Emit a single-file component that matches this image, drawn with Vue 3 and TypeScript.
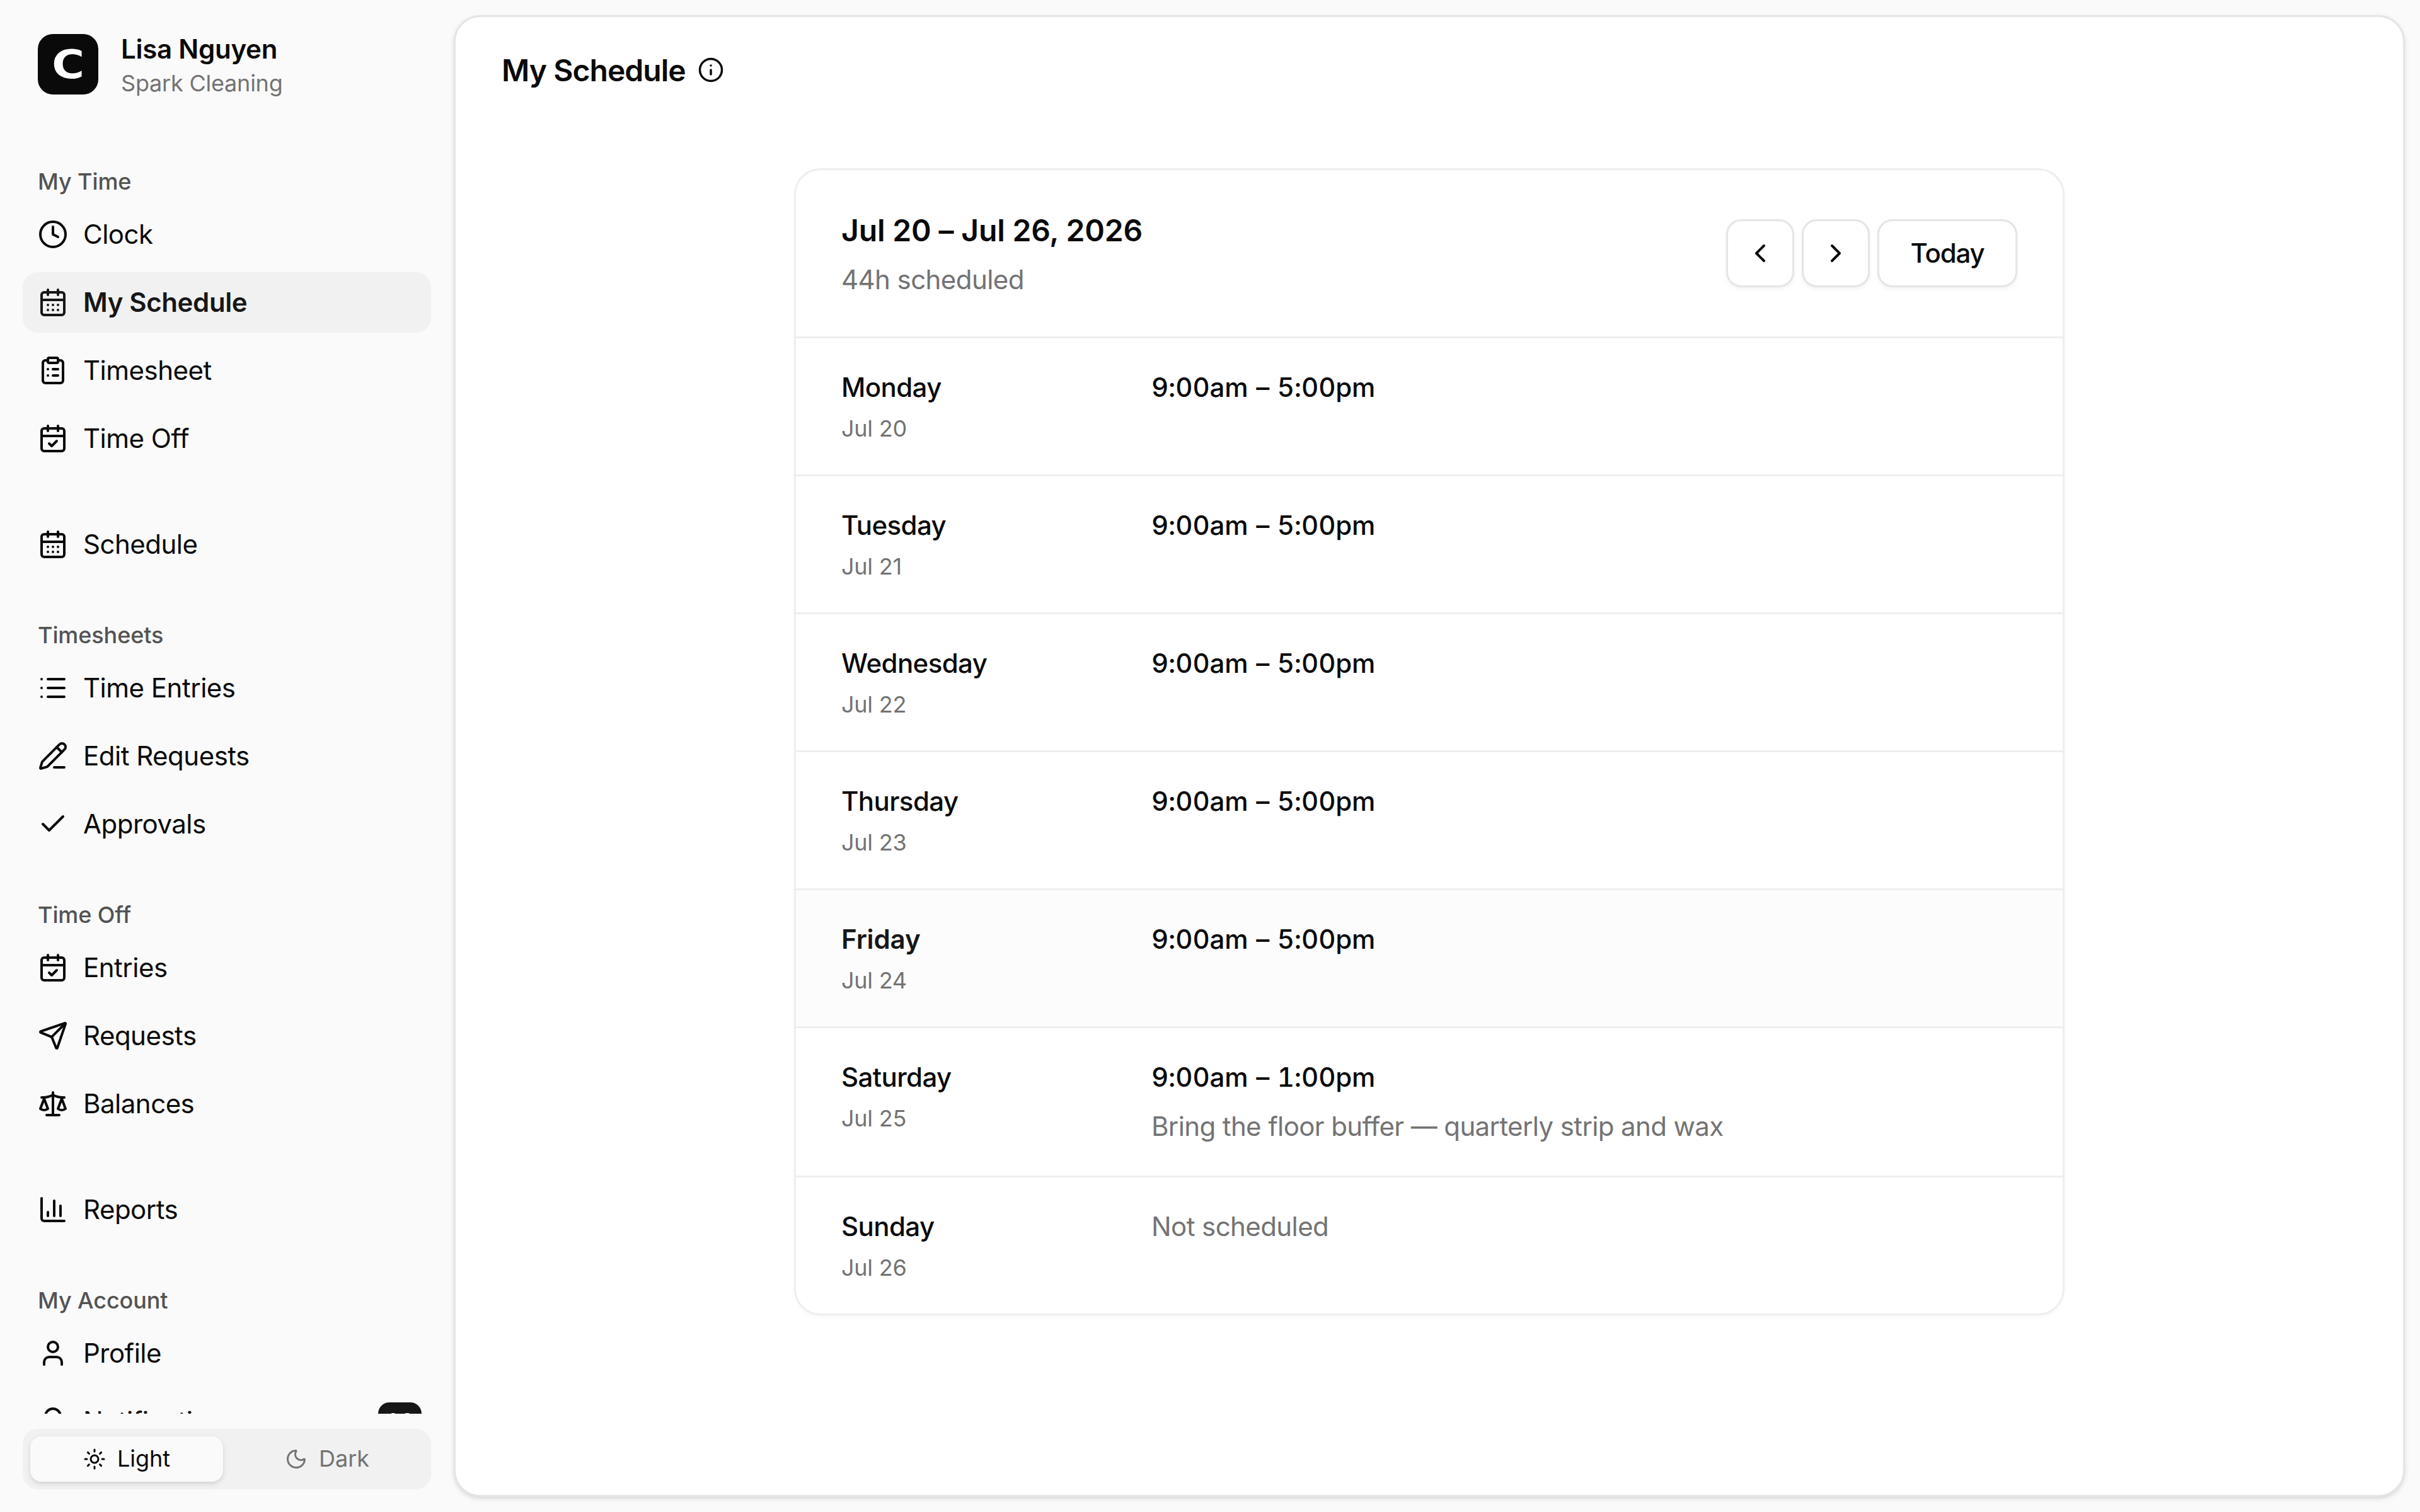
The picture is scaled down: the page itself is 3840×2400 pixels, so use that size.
<script setup lang="ts">
interface NavItem {
  label: string
  icon: string
  active?: boolean
  badge?: string
}

interface NavGroup {
  title?: string
  items: NavItem[]
}

interface Day {
  name: string
  date: string
  time?: string
  note?: string
  today?: boolean
}

const icons: Record<string, string[]> = {
  clock: ['M2 12a10 10 0 1 0 20 0a10 10 0 1 0-20 0', 'M12 6v6l4 2'],
  calendarDays: [
    'M8 2v4', 'M16 2v4',
    'M5 4h14a2 2 0 0 1 2 2v14a2 2 0 0 1-2 2H5a2 2 0 0 1-2-2V6a2 2 0 0 1 2-2z',
    'M3 10h18', 'M8 14h.01', 'M12 14h.01', 'M16 14h.01', 'M8 18h.01', 'M12 18h.01', 'M16 18h.01',
  ],
  calendarCheck: [
    'M8 2v4', 'M16 2v4',
    'M5 4h14a2 2 0 0 1 2 2v14a2 2 0 0 1-2 2H5a2 2 0 0 1-2-2V6a2 2 0 0 1 2-2z',
    'M3 10h18', 'm9 16 2 2 4-4',
  ],
  clipboard: [
    'M9 2h6a1 1 0 0 1 1 1v2a1 1 0 0 1-1 1H9a1 1 0 0 1-1-1V3a1 1 0 0 1 1-1z',
    'M16 4h2a2 2 0 0 1 2 2v14a2 2 0 0 1-2 2H6a2 2 0 0 1-2-2V6a2 2 0 0 1 2-2h2',
    'M12 11h4', 'M12 16h4', 'M8 11h.01', 'M8 16h.01',
  ],
  list: ['M3 5h.01', 'M3 12h.01', 'M3 19h.01', 'M8 5h13', 'M8 12h13', 'M8 19h13'],
  pencil: [
    'M13 21h8', 'm15 5 4 4',
    'M21.174 6.812a1 1 0 0 0-3.986-3.987L3.842 16.174a2 2 0 0 0-.5.83l-1.321 4.352a.5.5 0 0 0 .623.622l4.353-1.32a2 2 0 0 0 .83-.497z',
  ],
  check: ['M20 6 9 17l-5-5'],
  send: [
    'M14.536 21.686a.5.5 0 0 0 .937-.024l6.5-19a.496.496 0 0 0-.635-.635l-19 6.5a.5.5 0 0 0-.024.937l7.93 3.18a2 2 0 0 1 1.112 1.11z',
    'm21.854 2.147-10.94 10.939',
  ],
  scale: [
    'M12 3v18', 'm19 8 3 8a5 5 0 0 1-6 0zV7', 'M3 7h1a17 17 0 0 0 8-2 17 17 0 0 0 8 2h1',
    'm5 8 3 8a5 5 0 0 1-6 0zV7', 'M7 21h10',
  ],
  chart: ['M3 3v16a2 2 0 0 0 2 2h16', 'M18 17V9', 'M13 17V5', 'M8 17v-3'],
  user: ['M19 21v-2a4 4 0 0 0-4-4H9a4 4 0 0 0-4 4v2', 'M8 7a4 4 0 1 0 8 0a4 4 0 1 0-8 0'],
  bell: [
    'M10.268 21a2 2 0 0 0 3.464 0',
    'M3.262 15.326A1 1 0 0 0 4 17h16a1 1 0 0 0 .74-1.673C19.41 13.956 18 12.499 18 8A6 6 0 0 0 6 8c0 4.499-1.411 5.956-2.738 7.326',
  ],
  sun: [
    'M8 12a4 4 0 1 0 8 0a4 4 0 1 0-8 0', 'M12 2v2', 'M12 20v2', 'm4.93 4.93 1.41 1.41', 'm17.66 17.66 1.41 1.41',
    'M2 12h2', 'M20 12h2', 'm6.34 17.66-1.41 1.41', 'm19.07 4.93-1.41 1.41',
  ],
  moon: [
    'M20.985 12.486a9 9 0 1 1-9.473-9.472c.405-.022.617.46.402.803a6 6 0 0 0 8.268 8.268c.344-.215.825-.004.803.401',
  ],
  info: ['M2 12a10 10 0 1 0 20 0a10 10 0 1 0-20 0', 'M12 16v-4', 'M12 8h.01'],
  left: ['m15 18-6-6 6-6'],
  right: ['m9 18 6-6-6-6'],
}

const groups: NavGroup[] = [
  {
    title: 'My Time',
    items: [
      { label: 'Clock', icon: 'clock' },
      { label: 'My Schedule', icon: 'calendarDays', active: true },
      { label: 'Timesheet', icon: 'clipboard' },
      { label: 'Time Off', icon: 'calendarCheck' },
    ],
  },
  { items: [{ label: 'Schedule', icon: 'calendarDays' }] },
  {
    title: 'Timesheets',
    items: [
      { label: 'Time Entries', icon: 'list' },
      { label: 'Edit Requests', icon: 'pencil' },
      { label: 'Approvals', icon: 'check' },
    ],
  },
  {
    title: 'Time Off',
    items: [
      { label: 'Entries', icon: 'calendarCheck' },
      { label: 'Requests', icon: 'send' },
      { label: 'Balances', icon: 'scale' },
    ],
  },
  { items: [{ label: 'Reports', icon: 'chart' }] },
  {
    title: 'My Account',
    items: [
      { label: 'Profile', icon: 'user' },
      { label: 'Notifications', icon: 'bell', badge: '10' },
    ],
  },
]

const days: Day[] = [
  { name: 'Monday', date: 'Jul 20', time: '9:00am – 5:00pm' },
  { name: 'Tuesday', date: 'Jul 21', time: '9:00am – 5:00pm' },
  { name: 'Wednesday', date: 'Jul 22', time: '9:00am – 5:00pm' },
  { name: 'Thursday', date: 'Jul 23', time: '9:00am – 5:00pm' },
  { name: 'Friday', date: 'Jul 24', time: '9:00am – 5:00pm', today: true },
  {
    name: 'Saturday',
    date: 'Jul 25',
    time: '9:00am – 1:00pm',
    note: 'Bring the floor buffer — quarterly strip and wax',
  },
  { name: 'Sunday', date: 'Jul 26' },
]
</script>

<template>
  <div class="app">
    <aside class="sidebar">
      <header class="account">
        <div class="logo"><span class="logo-mark">C</span></div>
        <div class="account-text">
          <div class="account-name">Lisa Nguyen</div>
          <div class="account-org">Spark Cleaning</div>
        </div>
      </header>

      <nav class="nav">
        <section v-for="(group, g) in groups" :key="g" class="group" :class="{ titled: group.title }">
          <div v-if="group.title" class="group-title">{{ group.title }}</div>
          <ul class="items">
            <li v-for="item in group.items" :key="item.label" class="item" :class="{ active: item.active }">
              <svg class="icon" viewBox="0 0 24 24"><path v-for="d in icons[item.icon]" :key="d" :d="d" /></svg>
              <span class="item-label">{{ item.label }}</span>
              <span v-if="item.badge" class="badge">{{ item.badge }}</span>
            </li>
          </ul>
        </section>
      </nav>

      <footer class="theme">
        <button class="theme-option selected">
          <svg class="icon small" viewBox="0 0 24 24"><path v-for="d in icons.sun" :key="d" :d="d" /></svg>
          <span class="theme-label">Light</span>
        </button>
        <button class="theme-option">
          <svg class="icon small" viewBox="0 0 24 24"><path v-for="d in icons.moon" :key="d" :d="d" /></svg>
          <span class="theme-label">Dark</span>
        </button>
      </footer>
    </aside>

    <main class="panel">
      <header class="page-header">
        <h1 class="page-title">My Schedule</h1>
        <svg class="icon info" viewBox="0 0 24 24"><path v-for="d in icons.info" :key="d" :d="d" /></svg>
      </header>

      <section class="card">
        <header class="card-header">
          <div>
            <h2 class="range">Jul 20 – Jul 26, 2026</h2>
            <p class="total">44h scheduled</p>
          </div>
          <div class="controls">
            <button class="control square">
              <svg class="icon" viewBox="0 0 24 24"><path v-for="d in icons.left" :key="d" :d="d" /></svg>
            </button>
            <button class="control square">
              <svg class="icon" viewBox="0 0 24 24"><path v-for="d in icons.right" :key="d" :d="d" /></svg>
            </button>
            <button class="control wide">Today</button>
          </div>
        </header>

        <div v-for="day in days" :key="day.name" class="day" :class="{ today: day.today }">
          <div class="day-label">
            <div class="day-name">{{ day.name }}</div>
            <div class="day-date">{{ day.date }}</div>
          </div>
          <div class="shift">
            <div v-if="day.time" class="shift-time">{{ day.time }}</div>
            <div v-else class="shift-none">Not scheduled</div>
            <div v-if="day.note" class="shift-note">{{ day.note }}</div>
          </div>
        </div>
      </section>
    </main>
  </div>
</template>

<style>
html,
body {
  margin: 0;
  background: #fafafa;
  overflow: hidden;
}
</style>

<style scoped>
.app {
  display: flex;
  box-sizing: border-box;
  width: 3840px;
  height: 2400px;
  background: #fafafa;
  color: #0a0a0a;
  font-family: Inter, "Liberation Sans", sans-serif;
  font-size: 42px;
  line-height: 60px;
  letter-spacing: -0.58px;
  font-optical-sizing: none;
  font-variation-settings: "opsz" 14;
}

.app * {
  box-sizing: border-box;
}

.icon {
  flex: none;
  width: 48px;
  height: 48px;
  fill: none;
  stroke: currentColor;
  stroke-width: 2;
  stroke-linecap: round;
  stroke-linejoin: round;
}

.icon.small {
  width: 36px;
  height: 36px;
}

/* Sidebar */
.sidebar {
  display: flex;
  flex-direction: column;
  flex: none;
  width: 720px;
  height: 2400px;
  padding: 48px 36px 36px;
}

.account {
  display: flex;
  flex: none;
  align-items: center;
  gap: 36px;
  height: 108px;
  padding: 0 24px;
}

.logo {
  display: flex;
  align-items: center;
  justify-content: center;
  width: 96px;
  height: 96px;
  border-radius: 24px;
  background: #0a0a0a;
  color: #fff;
}

.logo-mark {
  font-family: "DejaVu Sans", sans-serif;
  font-weight: 700;
  font-size: 63px;
  line-height: 96px;
  letter-spacing: 0;
  transform: translateY(1px) scaleX(1.12);
}

.account-name {
  font-weight: 600;
  letter-spacing: -0.25px;
}

.account-org {
  font-size: 36px;
  line-height: 48px;
  letter-spacing: -0.22px;
  color: #737373;
}

.nav {
  flex: 1;
  min-height: 0;
  margin-top: 96px;
  overflow: hidden;
}

.group + .group {
  margin-top: 72px;
}

.group + .group.titled {
  margin-top: 60px;
}

.group-title {
  height: 72px;
  padding: 0 24px;
  font-size: 36px;
  font-weight: 500;
  line-height: 72px;
  letter-spacing: -0.1px;
  color: #535353;
}

.items {
  display: flex;
  flex-direction: column;
  gap: 12px;
  margin: 0;
  padding: 0;
  list-style: none;
}

.item {
  display: flex;
  align-items: center;
  gap: 24px;
  height: 96px;
  padding: 0 15px 0 24px;
  border-radius: 24px;
  letter-spacing: -0.5px;
}

.item.active {
  background: #f1f1f1;
  color: #171717;
  font-weight: 600;
  letter-spacing: -0.38px;
}

.item-label {
  flex: 1;
}

.badge {
  width: 69px;
  height: 60px;
  border-radius: 18px;
  background: #171717;
  color: #fafafa;
  font-size: 36px;
  font-weight: 500;
  font-variant-numeric: tabular-nums;
  text-align: center;
}

.theme {
  display: flex;
  flex: none;
  gap: 12px;
  height: 96px;
  margin-top: 24px;
  padding: 12px;
  border-radius: 24px;
  background: #f1f1f1;
}

button {
  display: flex;
  align-items: center;
  justify-content: center;
  margin: 0;
  padding: 0;
  border: 0;
  background: none;
  color: inherit;
  font: inherit;
  letter-spacing: inherit;
  font-optical-sizing: none;
  font-variation-settings: inherit;
}

.theme-option {
  flex: 1;
  gap: 18px;
  border-radius: 18px;
  color: #737373;
  font-size: 36px;
  line-height: 48px;
  letter-spacing: 0;
}

.theme-label {
  padding-bottom: 2px;
}

.theme-option.selected {
  background: #fafafa;
  color: #0a0a0a;
  box-shadow: 0 3px 9px rgba(0, 0, 0, 0.1), 0 3px 6px -3px rgba(0, 0, 0, 0.1);
}

/* Main panel */
.panel {
  flex: 1;
  margin: 24px 24px 24px 0;
  border: 3px solid #e5e5e5;
  border-radius: 42px;
  background: #fff;
  box-shadow: 0 3px 9px rgba(0, 0, 0, 0.1), 0 3px 6px -3px rgba(0, 0, 0, 0.1);
}

.page-header {
  display: flex;
  align-items: center;
  gap: 19px;
  height: 168px;
  padding: 0 73px;
}

.page-title {
  margin: 0;
  padding-top: 2px;
  font-size: 48px;
  font-weight: 600;
  line-height: 72px;
  letter-spacing: -0.95px;
}

.icon.info {
  width: 42px;
  height: 42px;
}

.card {
  width: 2016px;
  margin: 72px auto 0;
  border: 3px solid #eee;
  border-radius: 42px;
  box-shadow: 0 3px 6px rgba(0, 0, 0, 0.03);
  overflow: hidden;
}

.card-header {
  display: flex;
  align-items: center;
  justify-content: space-between;
  height: 264px;
  padding: 0 72px;
}

.range {
  margin: 0;
  font-size: 48px;
  font-weight: 600;
  line-height: 72px;
  letter-spacing: -0.15px;
}

.total {
  margin: 12px 0 0;
  color: #737373;
}

.controls {
  display: flex;
  gap: 12px;
}

.control {
  height: 108px;
  border: 3px solid #e5e5e5;
  border-radius: 24px;
  background: #fff;
  font-weight: 500;
  box-shadow: 0 3px 6px rgba(0, 0, 0, 0.05);
}

.control.square {
  width: 108px;
}

.control.wide {
  width: 222px;
  letter-spacing: -1.2px;
}

.day {
  display: flex;
  padding: 48px 72px;
  border-top: 3px solid #eee;
}

.day.today {
  background: #fcfcfc;
}

.day-label {
  flex: none;
  width: 492px;
}

.day-name,
.shift-time {
  font-weight: 500;
}

.day.today .day-name {
  color: #171717;
  font-weight: 600;
  letter-spacing: -0.1px;
}

.day-date {
  margin: 11px 0 1px;
  color: #737373;
  font-size: 36px;
  line-height: 48px;
  letter-spacing: -0.25px;
}

.shift-time {
  font-variant-numeric: tabular-nums;
  letter-spacing: -0.1px;
  word-spacing: 1.5px;
}

.shift-none {
  color: #737373;
}

.shift-note {
  margin-top: 18px;
  color: #737373;
  letter-spacing: -0.62px;
}
</style>
